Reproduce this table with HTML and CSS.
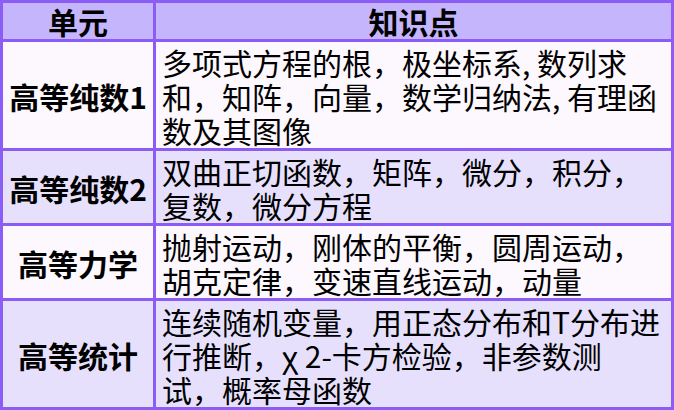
FILE: index.html
```html
<!DOCTYPE html>
<html lang="zh-CN">
<head>
<meta charset="utf-8">
<title>知识点</title>
<link rel="stylesheet" href="styles.css">
</head>
<body>
<div class="grid">
  <div class="cell head">单元</div>
  <div class="cell head">知识点</div>

  <div class="cell unit odd">高等纯数1</div>
  <div class="cell topics odd">多项式方程的根，极坐标系, 数列求<br>和，知阵，向量，数学归纳法, 有理函<br>数及其图像</div>

  <div class="cell unit even">高等纯数2</div>
  <div class="cell topics even">双曲正切函数，矩阵，微分，积分，<br>复数，微分方程</div>

  <div class="cell unit odd">高等力学</div>
  <div class="cell topics odd">抛射运动，刚体的平衡，圆周运动，<br>胡克定律，变速直线运动，动量</div>

  <div class="cell unit even">高等统计</div>
  <div class="cell topics even">连续随机变量，用正态分布和T分布进<br>行推断，χ 2-卡方检验，非参数测<br>试，概率母函数</div>
</div>
</body>
</html>
```

FILE: styles.css
```css
html, body {
  margin: 0;
  padding: 0;
  background: #ffffff;
}

.grid {
  width: 674px;
  height: 410px;
  box-sizing: border-box;
  display: grid;
  grid-template-columns: 150px 1fr;
  grid-template-rows: 36px 106px 72px 72px 106px;
  gap: 3px;
  padding: 3px;
  background: #8b5cf6;
  font-family: "Noto Sans CJK SC", "Noto Sans", sans-serif;
  font-size: 30px;
  color: #000;
}

.cell {
  box-sizing: border-box;
  line-height: 34px;
  white-space: nowrap;
}

.head {
  background: #c4b5fd;
  font-weight: 700;
  text-align: center;
  line-height: 36px;
}

.unit {
  font-weight: 700;
  display: flex;
  align-items: center;
  justify-content: center;
  padding-top: 2px;
}

.topics {
  padding: 3px 5px 1px 6px;
}

.odd {
  background: #fdf7fe;
}

.even {
  background: #e6e0fd;
}
```
